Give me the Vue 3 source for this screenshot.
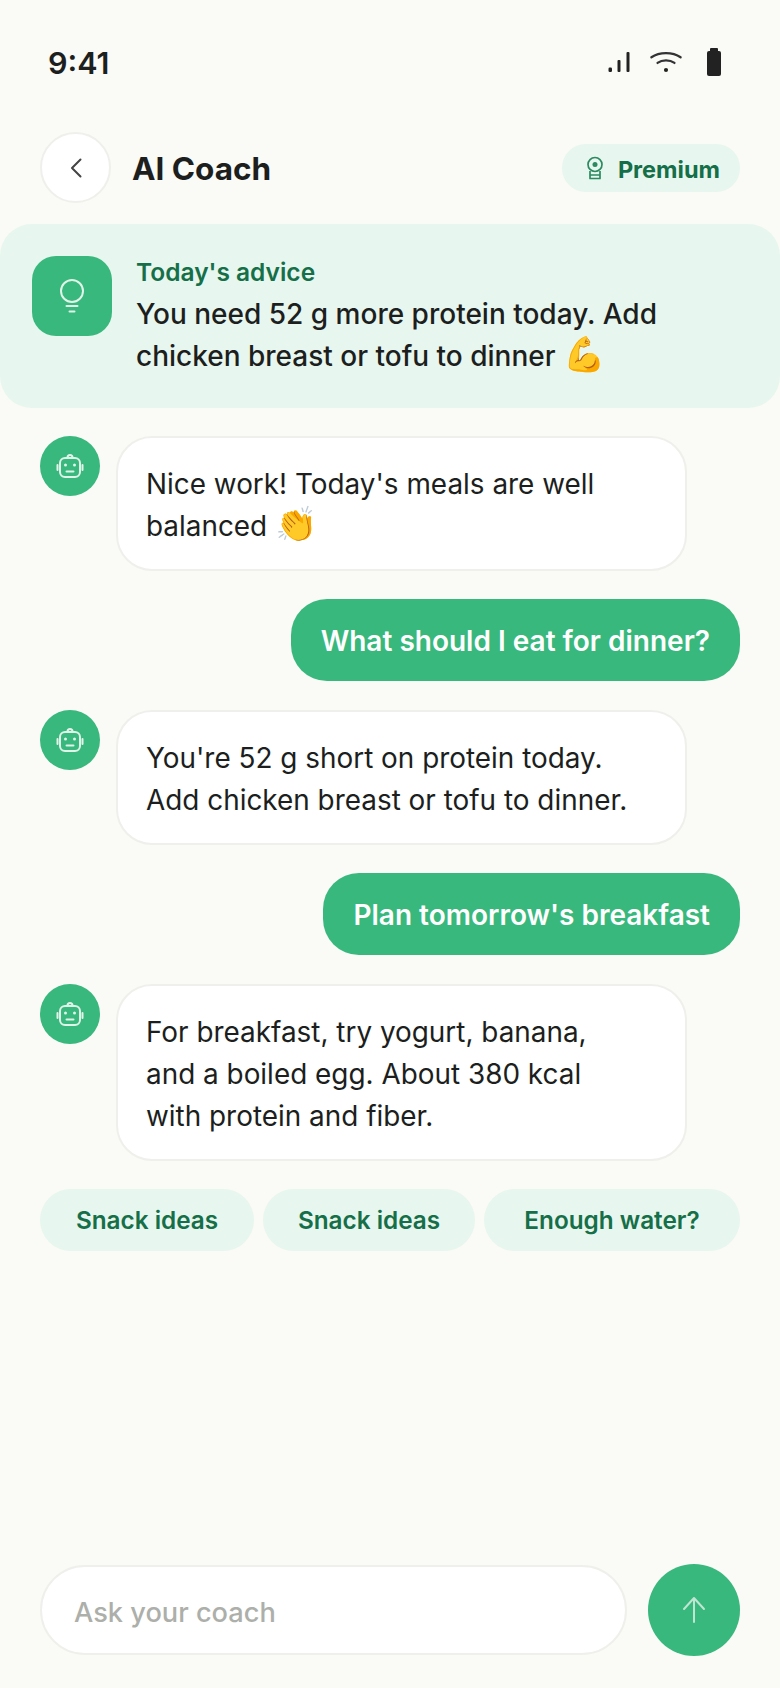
<script setup>
const messages = [
  { id: 1, from: 'coach', lines: ["Nice work! Today's meals are well", 'balanced'], emoji: '👏' },
  { id: 2, from: 'me', lines: ['What should I eat for dinner?'] },
  { id: 3, from: 'coach', lines: ["You're 52 g short on protein today.", 'Add chicken breast or tofu to dinner.'] },
  { id: 4, from: 'me', lines: ["Plan tomorrow's breakfast"] },
  { id: 5, from: 'coach', lines: ['For breakfast, try yogurt, banana,', 'and a boiled egg. About 380 kcal', 'with protein and fiber.'] }
]
const chips = ['Snack ideas', 'Snack ideas', 'Enough water?']
</script>

<template>
  <div class="screen">
    <div class="status">
      <span class="time">9:41</span>
      <div class="status-icons">
        <svg width="22" height="22" viewBox="0 0 22 22" fill="#222">
          <rect x="0.500" y="16.500" width="3.500" height="4.500" rx="1.200" />
          <rect x="9.500" y="9" width="3" height="12" rx="1" />
          <rect x="18.500" y="1" width="3" height="20" rx="1" />
        </svg>
        <svg width="32" height="24" viewBox="0 0 34 24" fill="none" stroke="#333" stroke-width="2.400" stroke-linecap="round">
          <path d="M1.500 7C10 1 24 1 32.500 7" />
          <path d="M8 13C13 9.500 21 9.500 26 13" />
          <circle cx="17" cy="20.500" r="2.200" fill="#222" stroke="none" />
        </svg>
        <svg width="16" height="28" viewBox="0 0 16 28" fill="#222">
          <rect x="4" y="0" width="8" height="5" rx="1" />
          <rect x="1" y="3" width="14" height="25" rx="2" />
        </svg>
      </div>
    </div>

    <header class="topbar">
      <button class="back">
        <svg width="20" height="24" viewBox="0 0 20 24" fill="none" stroke="#444" stroke-width="2" stroke-linecap="round" stroke-linejoin="round">
          <path d="M14.500 3.500 6 12l8.500 8.500" />
        </svg>
      </button>
      <h1 class="title">AI Coach</h1>
      <div class="premium">
        <svg width="20" height="24" viewBox="0 0 20 24" fill="none" stroke="#2b8a60" stroke-width="1.700">
          <circle cx="10" cy="8.500" r="7" />
          <circle cx="10" cy="8.500" r="2.500" fill="#2b8a60" stroke="none" />
          <path d="M5 15v7.500h10V15M5 19h10" stroke-linejoin="round" />
        </svg>
        <span class="premium-text">Premium</span>
      </div>
    </header>

    <section class="advice">
      <div class="advice-icon">
        <svg width="32" height="40" viewBox="0 0 32 40" fill="none" stroke="#dff3e9" stroke-width="2" stroke-linecap="round">
          <circle cx="16" cy="15" r="11" />
          <path d="M10.500 30h11M13.500 35.500h5" />
        </svg>
      </div>
      <div class="advice-body">
        <div class="advice-label">Today's advice</div>
        <p class="advice-text">You need 52 g more protein today. Add<br />chicken breast or tofu to dinner <span class="emoji">💪</span></p>
      </div>
    </section>

    <main class="chat">
      <div v-for="m in messages" :key="m.id" class="row" :class="m.from">
        <div v-if="m.from === 'coach'" class="avatar">
          <svg width="28" height="28" viewBox="0 0 28 28" fill="none" stroke="#dff3e9" stroke-width="2" stroke-linecap="round">
            <rect x="4" y="6" width="20" height="19" rx="5" />
            <path d="M11.500 5.500a2.500 2.500 0 0 1 5 0M1.500 13v5M26.500 13v5M10.500 19.500h7" />
            <circle cx="9.500" cy="13" r="1.500" fill="#dff3e9" stroke="none" />
            <circle cx="18.500" cy="13" r="1.500" fill="#dff3e9" stroke="none" />
          </svg>
        </div>
        <div class="bubble">
          <div v-for="(line, i) in m.lines" :key="line">
            {{ line }}
            <span v-if="m.emoji && i === m.lines.length - 1" class="emoji">{{ m.emoji }}</span>
          </div>
        </div>
      </div>
      <div class="chips">
        <button v-for="(c, i) in chips" :key="i" class="chip">{{ c }}</button>
      </div>
    </main>

    <footer class="composer">
      <div class="input">Ask your coach</div>
      <button class="send">
        <svg width="28" height="30" viewBox="0 0 28 30" fill="none" stroke="#bfe6d2" stroke-width="2" stroke-linecap="round" stroke-linejoin="round">
          <path d="M14 27V4M4 14 14 3l10 11" />
        </svg>
      </button>
    </footer>
  </div>
</template>

<style>
body {
  background: #fafaf6;
}
</style>

<style scoped>
.screen {
  height: 1688px;
  box-sizing: border-box;
  display: flex;
  flex-direction: column;
  background: #fafaf6;
  font-family: Inter, "Liberation Sans", sans-serif;
  color: #1c1f1e;
  overflow: hidden;
}
.status {
  height: 66px;
  margin-top: 29px;
  padding: 0 58px 0 48px;
  display: flex;
  justify-content: space-between;
  align-items: center;
}
.time {
  font-size: 30.500px;
  font-weight: 600;
}
.status-icons {
  display: flex;
  align-items: center;
  gap: 20px;
  margin-top: -1px;
}
.status-icons svg:last-child {
  margin-left: 4px;
}
.topbar {
  margin-top: 37px;
  padding: 0 40px;
  display: flex;
  align-items: center;
}
.back {
  width: 71px;
  height: 71px;
  border-radius: 50%;
  background: #fff;
  border: 2px solid #efefeb;
  display: flex;
  align-items: center;
  justify-content: center;
  padding: 0;
}
.title {
  margin: 2px 0 0 21px;
  font-size: 31.500px;
  font-weight: 700;
  flex: 1;
}
.premium {
  height: 48px;
  padding: 0 20px 0 23px;
  border-radius: 24px;
  background: #e7f6ee;
  color: #156f48;
  display: flex;
  align-items: center;
  gap: 13px;
  font-size: 23.500px;
  font-weight: 700;
}
.premium-text {
  padding-top: 3px;
}
.advice {
  margin-top: 21px;
  height: 184px;
  box-sizing: border-box;
  padding: 32px;
  border-radius: 32px;
  background: #e7f6ee;
  display: flex;
  gap: 24px;
}
.advice-icon {
  width: 80px;
  height: 80px;
  border-radius: 24px;
  background: #38b87c;
  display: flex;
  align-items: center;
  justify-content: center;
  flex-shrink: 0;
}
.advice-label {
  color: #156f48;
  font-size: 24.500px;
  font-weight: 600;
  line-height: 30px;
  margin-top: 1px;
}
.advice-text {
  margin: 6px 0 0;
  font-size: 28px;
  font-weight: 500;
  line-height: 42px;
}
.emoji {
  font-size: 34px;
  line-height: 0;
}
.chat {
  padding: 28px 40px 0;
  display: flex;
  flex-direction: column;
  gap: 29px;
}
.row {
  display: flex;
  gap: 16px;
}
.row.coach {
  margin-bottom: -1px;
}
.row.me {
  justify-content: flex-end;
}
.avatar {
  width: 60px;
  height: 60px;
  border-radius: 50%;
  background: #38b87c;
  display: flex;
  align-items: center;
  justify-content: center;
  flex-shrink: 0;
}
.bubble {
  box-sizing: border-box;
  width: 571px;
  padding: 25px 28px 22px;
  border-radius: 36px;
  background: #fff;
  border: 2px solid #efefeb;
  font-size: 27.900px;
  line-height: 42px;
}
.me .bubble {
  width: auto;
  height: 82px;
  padding: 21px 30px 19px;
  border: 0;
  background: #38b87c;
  color: #fff;
  font-size: 28px;
  font-weight: 600;
}
.chips {
  display: grid;
  grid-template-columns: 214px 212px 1fr;
  gap: 9px;
}
.chip {
  height: 62px;
  padding: 0;
  border: 0;
  border-radius: 31px;
  background: #e7f6ee;
  color: #156f48;
  font: 600 24.300px Inter, "Liberation Sans", sans-serif;
}
.composer {
  margin-top: auto;
  padding: 0 40px 32px;
  display: flex;
  align-items: center;
  gap: 21px;
}
.input {
  flex: 1;
  height: 90px;
  box-sizing: border-box;
  padding: 4px 0 0 32px;
  display: flex;
  align-items: center;
  border-radius: 45px;
  background: #fff;
  border: 2px solid #efefeb;
  color: #adafaa;
  font-size: 27.200px;
  font-weight: 500;
}
.send {
  width: 92px;
  height: 92px;
  padding: 0;
  border: 0;
  border-radius: 50%;
  background: #38b87c;
  display: flex;
  align-items: center;
  justify-content: center;
}
</style>
